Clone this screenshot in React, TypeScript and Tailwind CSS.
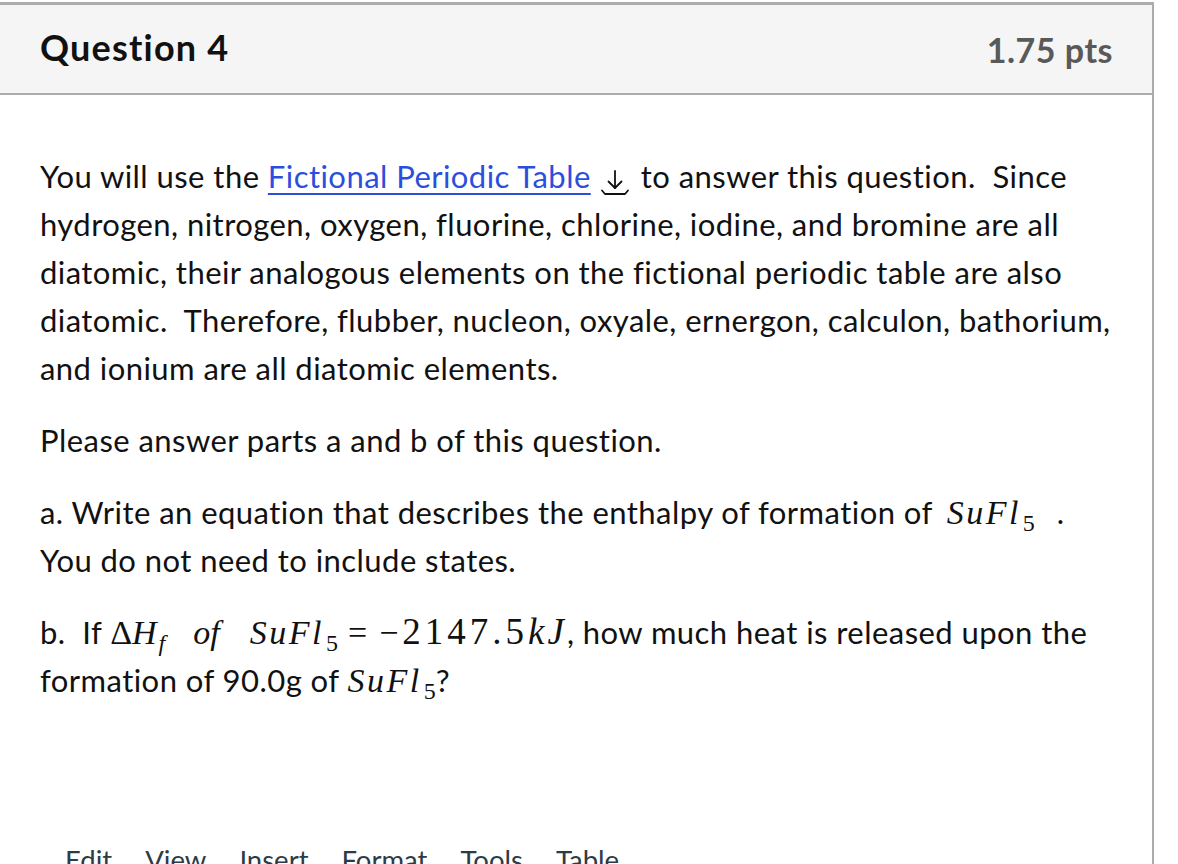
import React from "react";

const serif = "font-['Liberation_Serif','DejaVu_Serif',serif] leading-none";

function Sub({ children, italic = false }: { children: React.ReactNode; italic?: boolean }) {
  return (
    <span className={`inline-block text-[24px] leading-none align-[-7px] ml-[2px] ${italic ? "italic" : "not-italic"}`}>
      {children}
    </span>
  );
}

// MathJax-style formula for SuFl5
function SuFl5({ className = "" }: { className?: string }) {
  return (
    <span className={`${serif} text-[34px] tracking-normal ${className}`}>
      <span className="italic tracking-[2.5px]">SuFl</span>
      <Sub>5</Sub>
    </span>
  );
}

function DownloadIcon() {
  return (
    <svg width="32" height="30" viewBox="0 0 32 30" className="inline-block align-[-8px] ml-[8px] mr-[10px]" fill="none" stroke="#111" strokeWidth="1.8" strokeLinecap="round" strokeLinejoin="round">
      <path d="M16 5v17" />
      <path d="M9.5 15.5l6.5 6.5 6.5-6.5" />
      <path d="M3 24.5l3 3.5h20l3-3.5" />
    </svg>
  );
}

export default function App() {
  return (
    <div className="w-[1178px] h-[864px] overflow-hidden bg-white font-['Lato','Noto_Sans',sans-serif] text-[#111]">
      <div className="mt-[2px] w-[1154px] border-t-[3px] border-r-2 border-[#acacac] min-h-[900px]">
        {/* header */}
        <div className="h-[90px] bg-[#f5f5f5] border-b-2 border-[#acacac] flex items-center justify-between px-[40px]">
          <h2 className="text-[36px] font-bold text-[#111] tracking-[1.2px] -mt-[4px]">Question 4</h2>
          <span className="text-[34px] font-bold text-[#595959] tracking-[0.5px] -mr-[1px]">1.75 pts</span>
        </div>

        {/* body */}
        <div className="px-[40px] pt-[57px] text-[31px] tracking-[0.45px] leading-[48px] text-[#111] whitespace-nowrap">
          <p>
            You will use the{" "}
            <a href="#" className="text-[#2b4fdc] underline underline-offset-[5px] decoration-[1.5px]">
              Fictional Periodic Table
            </a>
            <DownloadIcon />
            to answer this question.&nbsp; Since
            <br />
            hydrogen, nitrogen, oxygen, fluorine, chlorine, iodine, and bromine are all
            <br />
            diatomic, their analogous elements on the fictional periodic table are also
            <br />
            diatomic.&nbsp; Therefore, flubber, nucleon, oxyale, ernergon, calculon, bathorium,
            <br />
            and ionium are all diatomic elements.
          </p>
          <p className="mt-[24px]">Please answer parts a and b of this question.</p>
          <p className="mt-[24px]">
            a. Write an equation that describes the enthalpy of formation of <SuFl5 className="ml-[6px]" />
            <span className="ml-[22px]">.</span>
            <br />
            You do not need to include states.
          </p>
          <p className="mt-[24px]">
            b.&nbsp; If{" "}
            <span className={`${serif} text-[34px] tracking-normal`}>
              <span className="not-italic">Δ</span>
              <span className="italic">H</span>
              <Sub italic>f</Sub>
              <span className="italic ml-[28px]">of</span>
              <span className="italic tracking-[2.5px] ml-[30px]">SuFl</span>
              <Sub>5</Sub>
              <span className="ml-[10px]">=</span>
              <span className="ml-[12px]">−</span>
              <span className="ml-[4px] text-[37px] tracking-[4px]">2147.5</span>
              <span className="italic text-[37px] tracking-[3px]">kJ</span>
            </span>
            , how much heat is released upon the
            <br />
            formation of 90.0g of <SuFl5 />?
          </p>
        </div>

        {/* editor toolbar */}
        <div className="mt-[138px] flex gap-[33px] pl-[65px] text-[27.5px] leading-[36px] text-[#2d3b45]">
          <span>Edit</span>
          <span>View</span>
          <span>Insert</span>
          <span>Format</span>
          <span>Tools</span>
          <span>Table</span>
        </div>
      </div>
    </div>
  );
}
